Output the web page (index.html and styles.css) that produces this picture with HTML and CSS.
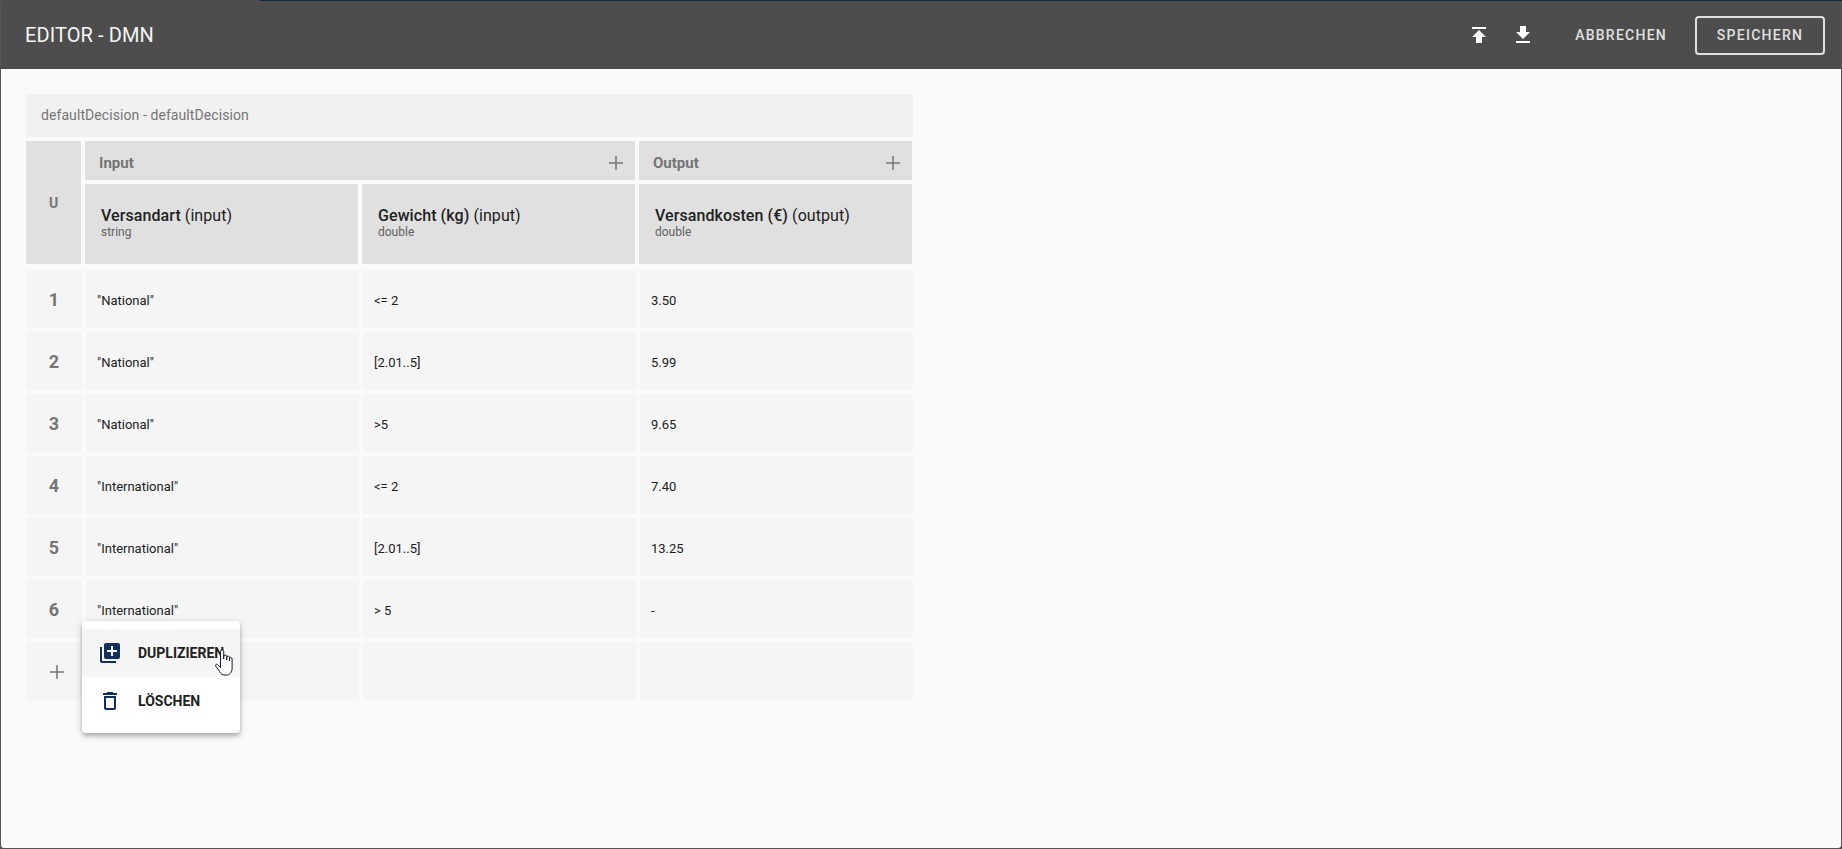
FILE: index.html
```html
<!DOCTYPE html>
<html lang="de">
<head>
  <meta charset="UTF-8" />
  <meta name="viewport" content="width=device-width, initial-scale=1.0"/>
  <title>Editor - DMN</title>
  <link rel="stylesheet" href="styles.css">
</head>
<body>

  <div class="page-edge"><span></span></div>

  <div class="dialog">
    <header class="toolbar">
      <h1>EDITOR - DMN</h1>
      <button class="icon-btn" aria-label="Hochladen">
        <svg viewBox="0 0 24 24"><path d="M5 4v2h14V4H5zm0 10h4v6h6v-6h4l-7-7-7 7z"/></svg>
      </button>
      <button class="icon-btn" aria-label="Herunterladen">
        <svg viewBox="0 0 24 24"><path d="M19 9h-4V3H9v6H5l7 7 7-7zM5 18v2h14v-2H5z"/></svg>
      </button>
      <button class="text-btn cancel">ABBRECHEN</button>
      <button class="text-btn save">SPEICHERN</button>
    </header>

    <main class="content">
      <div class="decision">
        <div class="decision-title">defaultDecision - defaultDecision</div>

        <div class="table-head">
          <div class="hit-policy">U</div>
          <div class="group group-input">
            <span>Input</span>
            <svg class="plus" viewBox="0 0 14 14"><path d="M7 0v14M0 7h14"/></svg>
          </div>
          <div class="group group-output">
            <span>Output</span>
            <svg class="plus" viewBox="0 0 14 14"><path d="M7 0v14M0 7h14"/></svg>
          </div>
          <div class="column">
            <div class="column-name"><strong>Versandart</strong> (input)</div>
            <div class="column-type">string</div>
          </div>
          <div class="column">
            <div class="column-name"><strong>Gewicht (kg)</strong> (input)</div>
            <div class="column-type">double</div>
          </div>
          <div class="column">
            <div class="column-name"><strong>Versandkosten (€)</strong> (output)</div>
            <div class="column-type">double</div>
          </div>
        </div>

        <div class="table-body">
          <div class="num">1</div><div class="cell">"National"</div><div class="cell">&lt;= 2</div><div class="cell">3.50</div>
          <div class="num">2</div><div class="cell">"National"</div><div class="cell">[2.01..5]</div><div class="cell">5.99</div>
          <div class="num">3</div><div class="cell">"National"</div><div class="cell">&gt;5</div><div class="cell">9.65</div>
          <div class="num">4</div><div class="cell">"International"</div><div class="cell">&lt;= 2</div><div class="cell">7.40</div>
          <div class="num">5</div><div class="cell">"International"</div><div class="cell">[2.01..5]</div><div class="cell">13.25</div>
          <div class="num">6</div><div class="cell">"International"</div><div class="cell">&gt; 5</div><div class="cell">-</div>
          <div class="num add-row">
            <svg class="plus" viewBox="0 0 14 14"><path d="M7 0v14M0 7h14"/></svg>
          </div>
          <div class="cell"></div><div class="cell"></div><div class="cell"></div>
        </div>

        <div class="menu">
          <div class="menu-item active">
            <svg viewBox="0 0 24 24"><path d="M4 6H2v14c0 1.1.9 2 2 2h14v-2H4V6zm16-4H8c-1.1 0-2 .9-2 2v12c0 1.1.9 2 2 2h12c1.1 0 2-.9 2-2V4c0-1.1-.9-2-2-2zm-1 9h-4v4h-2v-4H9V9h4V5h2v4h4v2z"/></svg>
            <span>DUPLIZIEREN</span>
            <svg class="hand" viewBox="0 0 18 27"><path d="M5.5 16V2.5a1.6 1.6 0 0 1 3.2 0V10V7.5a1.5 1.5 0 0 1 3 0V11V8.5a1.4 1.4 0 0 1 2.8 0V12V10a1.3 1.3 0 0 1 2.6 0V19c0 4-2 7-6 7h-1c-3 0-4-1-5.500-3.500L.7 17c-.7-1.200.8-2.400 1.800-1.400L5.500 18.500Z"/></svg>
          </div>
          <div class="menu-item">
            <svg viewBox="0 0 24 24"><path d="M6 19c0 1.100.9 2 2 2h8c1.100 0 2-.9 2-2V7H6v12zM8 9h8v10H8V9zm7.500-5l-1-1h-5l-1 1H5v2h14V4h-3.500z"/></svg>
            <span>LÖSCHEN</span>
          </div>
        </div>
      </div>
    </main>
  </div>

</body>
</html>
```

FILE: styles.css
```css
* {
  box-sizing: border-box;
}
html, body {
  height: 100%;
}
body {
  margin: 0;
  background: #4d4d4d;
  font-family: Roboto, "Liberation Sans", sans-serif;
  color: #212121;
  overflow: hidden;
}
.page-edge {
  height: 1px;
  background: #4d4d4d;
}
.page-edge span {
  display: block;
  height: 1px;
  margin-left: 260px;
  background: #10293f;
}
.dialog {
  height: 848px;
  border: 1px solid #555;
  border-top: none;
  border-radius: 0 0 4px 4px;
  background: #fafafa;
  display: flex;
  flex-direction: column;
}

/* toolbar */
.toolbar {
  height: 68px;
  flex: none;
  background: #4d4d4d;
  display: flex;
  align-items: center;
  padding: 0 16px 0 24px;
  color: #e0e0e0;
}
.toolbar h1 {
  margin: 0 auto 0 0;
  font-size: 20px;
  font-weight: 400;
  letter-spacing: .1px;
  color: #f5f5f5;
}
.icon-btn {
  width: 24px;
  height: 24px;
  padding: 0;
  margin-right: 20px;
  border: none;
  background: none;
  cursor: pointer;
}
.icon-btn svg {
  display: block;
  width: 24px;
  height: 24px;
  fill: #fff;
}
.text-btn {
  height: 39px;
  padding: 0 18px;
  border: 2px solid transparent;
  border-radius: 4px;
  background: none;
  color: #e0e0e0;
  font-family: inherit;
  font-size: 14px;
  font-weight: 500;
  letter-spacing: 1.25px;
  cursor: pointer;
}
.cancel {
  margin-right: 8px;
}
.save {
  width: 130px;
  padding: 0;
  border-color: #e0e0e0;
}

/* table */
.content {
  flex: 1;
  padding: 25px;
}
.decision {
  position: relative;
  width: 887px;
}
.decision-title {
  height: 43px;
  margin-bottom: 4px;
  padding: 0 0 1px 15px;
  display: flex;
  align-items: center;
  background: #f1f1f1;
  color: #757575;
  font-size: 14px;
  letter-spacing: .08px;
}
.table-head {
  display: grid;
  grid-template-columns: 55px 273px 273px 273px;
  grid-template-rows: 39px 80px;
  gap: 4px;
  margin-bottom: 6px;
}
.table-head > div {
  background: #e0e0e0;
}
.hit-policy {
  grid-row: 1 / 3;
  display: flex;
  align-items: center;
  justify-content: center;
  color: #757575;
  font-size: 14px;
  font-weight: 700;
}
.group {
  display: flex;
  align-items: center;
  justify-content: space-between;
  padding: 5px 12px 0 14px;
  color: #757575;
  font-size: 15px;
  font-weight: 700;
}
.group-input {
  grid-column: 2 / 4;
}
.plus {
  display: block;
  width: 14px;
  height: 14px;
  fill: none;
  stroke: #757575;
  stroke-width: 1.5;
}
.column {
  padding: 22px 16px 0;
}
.column-name {
  font-size: 16px;
  line-height: 19px;
  letter-spacing: .08px;
}
.column-name strong {
  font-weight: 500;
}
.column-type {
  font-size: 12px;
  line-height: 14px;
  color: #616161;
}
.table-body {
  display: grid;
  grid-template-columns: 56px 273px 273px 273px;
  grid-auto-rows: 58px;
  gap: 4px;
}
.num, .cell {
  display: flex;
  align-items: center;
  background: #f5f5f5;
}
.num {
  justify-content: center;
  color: #757575;
  font-size: 18px;
  font-weight: 700;
}
.cell {
  padding: 3px 11px 0;
  font-size: 13px;
}
.add-row {
  padding: 2px 0 0 6px;
}

/* context menu */
.menu {
  position: absolute;
  left: 56px;
  top: 527px;
  width: 158px;
  padding: 8px 0;
  background: #fff;
  border-radius: 4px;
  box-shadow: 0 2px 4px -1px rgba(0,0,0,.2), 0 4px 5px 0 rgba(0,0,0,.14), 0 1px 10px 0 rgba(0,0,0,.12);
}
.menu-item {
  position: relative;
  height: 48px;
  padding-left: 16px;
  display: flex;
  align-items: center;
  gap: 16px;
  font-size: 14px;
  font-weight: 700;
}
.menu-item svg {
  width: 24px;
  height: 24px;
  fill: #12305a;
}
.menu-item.active {
  background: #f5f5f5;
}
.menu-item svg.hand {
  position: absolute;
  left: 133px;
  top: 20px;
  width: 18px;
  height: 27px;
  fill: #fff;
  stroke: #1a1a2e;
  stroke-width: 1;
}
```
